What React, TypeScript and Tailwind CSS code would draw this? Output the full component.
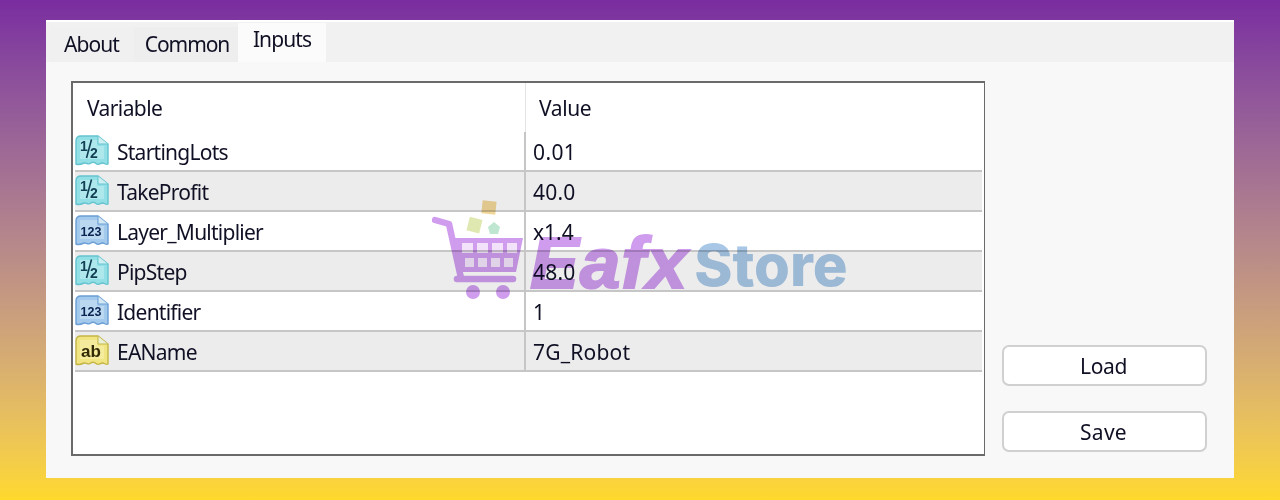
import React from "react";

type Kind = "half" | "num" | "str";

const palette: Record<Kind, { fill: string; edge: string; inner: string; label: string; size: number; ink: string }> = {
  half: { fill: "#92dfe6", edge: "#64c3cf", inner: "#c4eff2", label: "", size: 0, ink: "#123f55" },
  num: { fill: "#a3c9ec", edge: "#6a9ed4", inner: "#cfe3f6", label: "123", size: 12.5, ink: "#0b2450" },
  str: { fill: "#f1e583", edge: "#c4b545", inner: "#f8f0b0", label: "ab", size: 17, ink: "#322a06" },
};

function TypeIcon({ kind }: { kind: Kind }) {
  const p = palette[kind];
  return (
    <svg width="34" height="32" viewBox="0 0 34 32" className="shrink-0">
      <path
        d="M6 1H23L33 9V29C31 30.5 29.5 27.5 27 28C24.5 29 23 30.5 21 28.5C19 26.5 17 27 15 28.5C13 30 11 27.5 9 28C7 29 4 30.5 1 29V6C1 3 3 1 6 1Z"
        fill={p.fill}
        stroke={p.edge}
        strokeWidth="1.4"
      />
      <path d="M5 5H22V11H29V24H5Z" fill={p.inner} fillOpacity="0.55" />
      <path d="M23 1V9H33" fill="#e8f6f8" fillOpacity="0.7" stroke={p.edge} strokeWidth="1" />
      {kind === "half" ? (
        <g fill={p.ink} fontFamily="'Liberation Sans', sans-serif" fontWeight="700">
          <text x="5" y="16" fontSize="14">1</text>
          <path d="M16.5 4.5L11.5 23" stroke={p.ink} strokeWidth="1.6" />
          <text x="15" y="23" fontSize="14">2</text>
        </g>
      ) : (
        <text
          x="16"
          y={kind === "num" ? 20.5 : 21.5}
          textAnchor="middle"
          fontSize={p.size}
          fontWeight="700"
          fontFamily="'Liberation Sans', sans-serif"
          fill={p.ink}
        >
          {p.label}
        </text>
      )}
    </svg>
  );
}

const rows: { kind: Kind; name: string; value: string; shade: boolean; vt: string }[] = [
  { kind: "half", name: "StartingLots", value: "0.01", shade: false, vt: "tracking-[0.4px]" },
  { kind: "half", name: "TakeProfit", value: "40.0", shade: true, vt: "tracking-[0.2px]" },
  { kind: "num", name: "Layer_Multiplier", value: "x1.4", shade: false, vt: "tracking-[0px]" },
  { kind: "half", name: "PipStep", value: "48.0", shade: true, vt: "tracking-[0.2px]" },
  { kind: "num", name: "Identifier", value: "1", shade: false, vt: "tracking-[0px]" },
  { kind: "str", name: "EAName", value: "7G_Robot", shade: true, vt: "tracking-[0.2px]" },
];

function Cart() {
  return (
    <svg width="96" height="102" viewBox="0 0 96 102" className="shrink-0">
      <rect x="50" y="3" width="14" height="13" fill="#f2d79a" transform="rotate(6 57 9)" />
      <rect x="36" y="20" width="13" height="14" fill="#dfe8b0" transform="rotate(14 42 27)" />
      <path d="M62 24L68 29L66 36H58L56 29Z" fill="#bfe6d0" />
      <path d="M3 22L17 26L29 80" fill="none" stroke="#cf9cee" strokeWidth="6.5" strokeLinecap="round" strokeLinejoin="round" />
      <path d="M21 40H91L84 74H28Z" fill="#cf9cee" />
      <g fill="#ffffff" fillOpacity="0.72">
        <rect x="30" y="45" width="11" height="10" />
        <rect x="45" y="45" width="11" height="10" />
        <rect x="60" y="45" width="11" height="10" />
        <rect x="75" y="45" width="10" height="10" />
        <rect x="33" y="60" width="9" height="9" />
        <rect x="46" y="60" width="9" height="9" />
        <rect x="59" y="60" width="9" height="9" />
        <rect x="72" y="60" width="9" height="9" />
      </g>
      <path d="M25 81H81" stroke="#cf9cee" strokeWidth="6.5" strokeLinecap="round" />
      <circle cx="41" cy="94" r="7" fill="#cf9cee" />
      <circle cx="71" cy="94" r="7" fill="#cf9cee" />
    </svg>
  );
}

export default function App() {
  const font = "font-['Noto_Sans','Open_Sans',sans-serif]";
  return (
    <div className={`w-[1280px] h-[500px] overflow-hidden pt-[20px] pl-[46px] bg-linear-to-b from-[#7a2ca0] to-[#ffd92a] ${font} text-[21px] text-[#101025]`}>
      <div className="relative w-[1188px] h-[458px] bg-[#f8f8f9] border-t-2 border-white flex flex-col">
        <div className="h-[40px] shrink-0 bg-[#f1f1f2] flex items-end pl-[4px]">
          <div className="w-[84px] h-[35px] flex items-center justify-center bg-[#f0f0f0] tracking-[-0.9px] pr-[1px]">About</div>
          <div className="w-[104px] h-[35px] flex items-center justify-center bg-[#eeeeef] tracking-[-1.1px] pl-[2px]">Common</div>
          <div className="w-[88px] h-[39px] flex items-start justify-center bg-[#fbfbfb] pt-[1px] tracking-[-0.9px]">Inputs</div>
        </div>
        <div className="flex-1 flex pl-[25px] pt-[19px] pb-[21px]">
          <div className="w-[914px] h-[375px] border-2 border-[#6a6a6a] border-r-[1.5px] bg-white flex flex-col px-[2px]">
            <div className="h-[49px] shrink-0 flex items-center">
              <div className="w-[451px] pl-[12px] pt-[2px] h-full flex items-center border-r border-[#e4e4e4] tracking-[-0.6px]">Variable</div>
              <div className="pl-[13px] pt-[2px] tracking-[-0.4px]">Value</div>
            </div>
            {rows.map((r) => (
              <div
                key={r.name}
                className={`h-[40px] shrink-0 flex border-b-2 border-[#c6c6c6] ${r.shade ? "bg-[#ececec]" : "bg-white"}`}
              >
                <div className="w-[451px] h-full flex items-center border-r-2 border-[#c6c6c6] gap-[8px]">
                  <TypeIcon kind={r.kind} />
                  <span className="tracking-[-0.75px] pt-[3px]">{r.name}</span>
                </div>
                <div className={`pl-[7px] pt-[3px] flex items-center ${r.vt}`}>{r.value}</div>
              </div>
            ))}
          </div>
          <div className="ml-[17px] flex flex-col gap-[25px] pt-[264px]">
            <button className="w-[205px] h-[41px] rounded-[7px] bg-white border-2 border-[#d0d0d0] text-center tracking-[-0.4px] pt-[2px] pr-[2px]">Load</button>
            <button className="w-[205px] h-[41px] rounded-[7px] bg-white border-2 border-[#d0d0d0] text-center tracking-[0.3px] pt-[2px] pr-[2px]">Save</button>
          </div>
        </div>
        <div className="absolute left-[386px] top-[176px] flex items-end mix-blend-multiply">
          <Cart />
          <span className="font-['Liberation_Sans',sans-serif] font-bold italic text-[73px] leading-[72px] text-[#cf9cee] [-webkit-text-stroke:2px_#cf9cee] ml-[2px] mb-[1px] tracking-[1px]">Eafx</span>
          <span className="font-['Inter',sans-serif] font-extrabold text-[58px] leading-[62px] text-[#a8c7e6] ml-[6px] mb-[4px] tracking-[0px]">Store</span>
        </div>
      </div>
    </div>
  );
}
